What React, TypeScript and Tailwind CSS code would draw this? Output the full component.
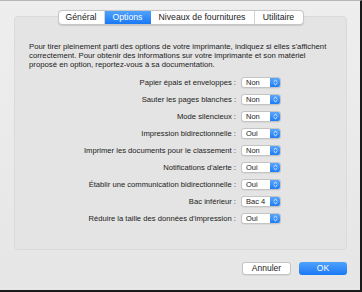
const rows: { label: string; value: string }[] = [
  { label: 'Papier épais et enveloppes :', value: 'Non' },
  { label: 'Sauter les pages blanches :', value: 'Non' },
  { label: 'Mode silencieux :', value: 'Non' },
  { label: 'Impression bidirectionnelle :', value: 'Oui' },
  { label: 'Imprimer les documents pour le classement :', value: 'Non' },
  { label: "Notifications d'alerte :", value: 'Oui' },
  { label: 'Établir une communication bidirectionnelle :', value: 'Oui' },
  { label: 'Bac inférieur :', value: 'Bac 4' },
  { label: "Réduire la taille des données d'impression :", value: 'Oui' },
];

const tabs = ['Général', 'Options', 'Niveaux de fournitures', 'Utilitaire'];

function PopUp({ value }: { value: string }) {
  return (
    <div className="flex h-[11px] w-[40px] items-stretch overflow-hidden rounded-[3px] border border-[#c4c4c4] bg-white shadow-[0_0.5px_0.5px_rgba(0,0,0,0.1)]">
      <span className="flex-1 pl-[4px] text-[7.5px] leading-[10px] text-[#222]">{value}</span>
      <span className="flex w-[10px] items-center justify-center bg-gradient-to-b from-[#5aa6fc] to-[#1a7cf5]">
        <svg width="5" height="7" viewBox="0 0 5 7" fill="none" stroke="white" strokeWidth="0.9" strokeLinecap="round" strokeLinejoin="round">
          <path d="M1 2.6 L2.5 1.2 L4 2.6" />
          <path d="M1 4.4 L2.5 5.8 L4 4.4" />
        </svg>
      </span>
    </div>
  );
}

export default function App() {
  return (
    <div
      className="flex h-[292px] w-[362px] flex-col border-t border-r-2 border-b-2 border-t-[#b8b8b8] border-r-[#1a1a1a] border-b-[#1a1a1a] bg-gradient-to-b from-[#eeeeee] to-[#e6e6e6] text-[#222]"
      style={{ fontFamily: '"Liberation Sans", Arial, sans-serif' }}
    >
      <div className="relative ml-[14px] mt-[15px] h-[234px] w-[333px] rounded-[4px] border border-[#dadada] bg-[#e4e4e4]">
        <div className="absolute left-1/2 top-[-7px] flex h-[15px] -translate-x-1/2 overflow-hidden rounded-[4px] border border-[#c6c6c6] bg-white text-[8.7px] leading-[13px] shadow-[0_0.5px_1px_rgba(0,0,0,0.12)]">
          {tabs.map((t, i) => (
            <div
              key={t}
              className={
                i === 1
                  ? 'w-[46px] bg-gradient-to-b from-[#4ea2fb] to-[#1878f4] text-center text-white'
                  : i === 0
                  ? 'w-[46px] border-r border-[#d4d4d4] text-center'
                  : i === 2
                  ? 'w-[104px] border-r border-[#d4d4d4] text-center'
                  : 'w-[48px] text-center'
              }
            >
              {t}
            </div>
          ))}
        </div>

        <p className="pl-[14px] pr-[6px] pt-[25px] text-[7.75px] leading-[9px]">
          Pour tirer pleinement parti des options de votre imprimante, indiquez si elles s'affichent
          <br />
          correctement. Pour obtenir des informations sur votre imprimante et son matériel
          <br />
          proposé en option, reportez-vous à sa documentation.
        </p>

        <div className="mt-[5px] flex flex-col">
          {rows.map(r => (
            <div key={r.label} className="flex h-[17px] items-center justify-end gap-[5px] pr-[65px]">
              <span className="text-[7.65px]">{r.label}</span>
              <PopUp value={r.value} />
            </div>
          ))}
        </div>
      </div>

      <div className="mr-[13px] mt-[12px] flex justify-end gap-[8px] text-[8.5px]">
        <button className="h-[13px] w-[49px] rounded-[3px] border border-[#c4c4c4] bg-white leading-[11px] text-[#222] shadow-[0_0.5px_0.5px_rgba(0,0,0,0.12)]">
          Annuler
        </button>
        <button className="h-[13px] w-[48px] rounded-[3px] bg-gradient-to-b from-[#4ea2fb] to-[#1878f4] leading-[13px] text-white">
          OK
        </button>
      </div>
    </div>
  );
}
